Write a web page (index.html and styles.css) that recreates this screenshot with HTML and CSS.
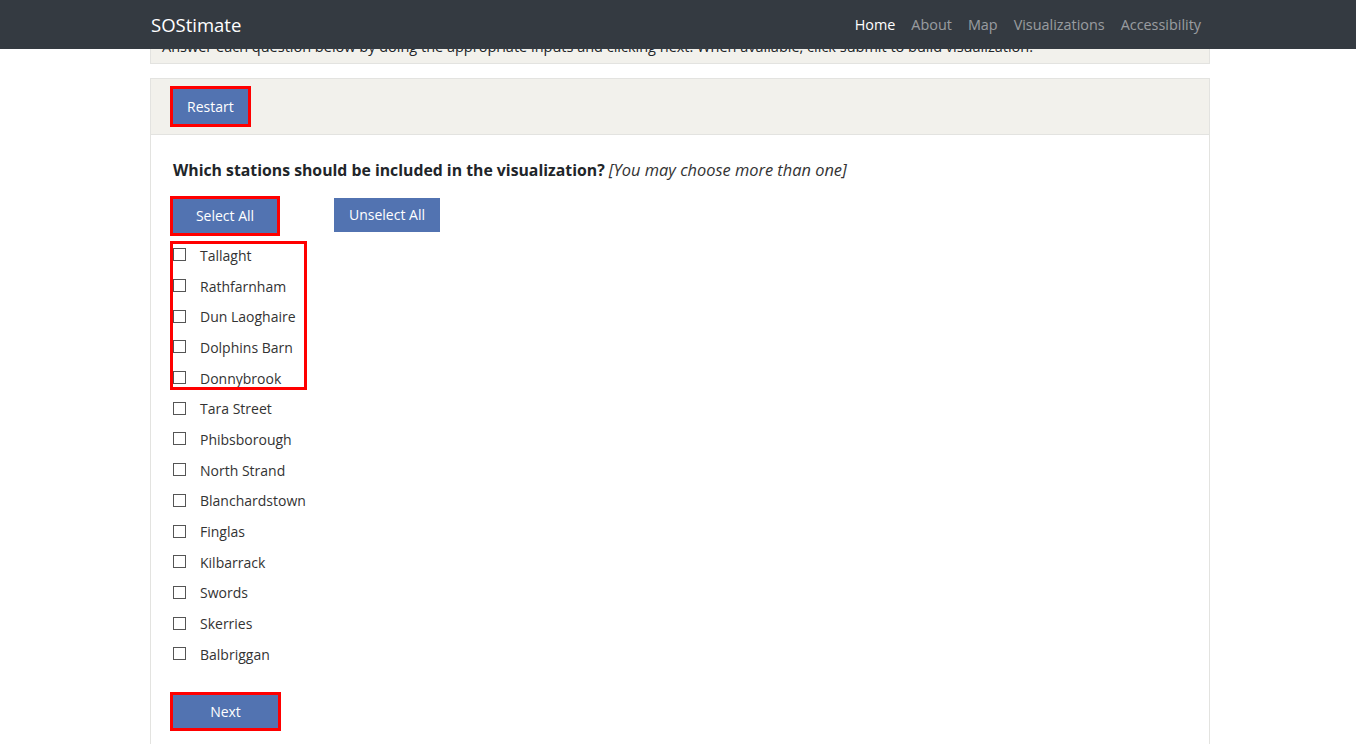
FILE: index.html
```html
<!DOCTYPE html>
<html lang="en">
<head>
<meta charset="utf-8">
<title>SOStimate</title>
<link rel="stylesheet" href="styles.css">
</head>
<body>
<nav class="navbar">
  <div class="nav-inner">
    <a class="brand" href="#">SOStimate</a>
    <ul class="nav-links">
      <li><a class="active" href="#">Home</a></li>
      <li><a href="#">About</a></li>
      <li><a href="#">Map</a></li>
      <li><a href="#">Visualizations</a></li>
      <li><a href="#">Accessibility</a></li>
    </ul>
  </div>
</nav>
<main class="container">
  <div class="intro">Answer each question below by doing the appropriate inputs and clicking next. When available, click submit to build visualization.</div>
  <section class="card">
    <div class="card-header">
      <button class="btn flagged">Restart</button>
    </div>
    <div class="card-body">
      <p class="question"><strong>Which stations should be included in the visualization?</strong> <em>[You may choose more than one]</em></p>
      <div class="btn-row">
        <button class="btn flagged btn-select">Select All</button>
        <button class="btn btn-unselect">Unselect All</button>
      </div>
      <div class="options">
        <div class="group flagged-group">
          <label class="opt"><span class="box"></span>Tallaght</label>
          <label class="opt"><span class="box"></span>Rathfarnham</label>
          <label class="opt"><span class="box"></span>Dun Laoghaire</label>
          <label class="opt"><span class="box"></span>Dolphins Barn</label>
          <label class="opt"><span class="box"></span>Donnybrook</label>
        </div>
        <label class="opt"><span class="box"></span>Tara Street</label>
        <label class="opt"><span class="box"></span>Phibsborough</label>
        <label class="opt"><span class="box"></span>North Strand</label>
        <label class="opt"><span class="box"></span>Blanchardstown</label>
        <label class="opt"><span class="box"></span>Finglas</label>
        <label class="opt"><span class="box"></span>Kilbarrack</label>
        <label class="opt"><span class="box"></span>Swords</label>
        <label class="opt"><span class="box"></span>Skerries</label>
        <label class="opt"><span class="box"></span>Balbriggan</label>
      </div>
      <button class="btn flagged btn-next">Next</button>
    </div>
  </section>
</main>
</body>
</html>
```
FILE: styles.css
```css
*, *::before, *::after { box-sizing: border-box; }
html, body { margin: 0; padding: 0; }
body {
  font-family: "Open Sans", "Noto Sans", sans-serif;
  font-size: 14px;
  color: #212529;
  background: #fff;
}
.navbar {
  position: fixed;
  top: 0; left: 0; right: 0;
  height: 49px;
  background: #343a41;
  z-index: 10;
}
.nav-inner {
  width: 1060px;
  margin-left: calc(50% - 528px);
  height: 100%;
  display: flex;
  align-items: center;
  justify-content: space-between;
}
.brand {
  color: #fff;
  text-decoration: none;
  font-size: 18.5px;
  padding-left: 1px;
}
.nav-links {
  list-style: none;
  margin: 0;
  padding: 0;
  display: flex;
}
.nav-links a {
  display: block;
  padding: 0 8px;
  color: rgba(255,255,255,0.5);
  text-decoration: none;
  font-size: 14.4px;
}
.nav-links li:last-child a { padding-right: 9px; }
.nav-links a.active { color: #fff; }

.container {
  width: 1060px;
  margin-left: calc(50% - 528px);
  padding-top: 28px;
}
.intro {
  background: #f2f1ec;
  border: 1px solid #e3e3e0;
  padding: 7px 11px 5px;
  line-height: 22px;
  font-size: 14.5px;
  color: #212529;
}
.card {
  margin-top: 14px;
  border: 1px solid #e3e3e0;
  border-bottom: none;
  min-height: 700px;
}
.card-header {
  background: #f2f1ec;
  border-bottom: 1px solid #e3e3e0;
  padding: 10px 22px;
}
.card-body {
  padding: 24px 22px 20px;
}
.btn {
  font-family: inherit;
  font-size: 14px;
  color: #fff;
  background: #5273b1;
  border: none;
  border-radius: 0;
  height: 35px;
  padding: 0 14px;
  display: block;
  line-height: 35px;
}
.flagged { outline: 3px solid #f00; }
.question {
  margin: 0;
  line-height: 22px;
  font-size: 15.8px;
  color: #212529;
}
.question em { color: #333; font-size: 16.4px; }
.btn-row {
  margin-top: 18px;
  display: flex;
  align-items: flex-start;
  gap: 57px;
}
.btn-select { width: 104px; height: 34px; line-height: 34px; padding: 0; }
.btn-unselect { width: 106px; height: 34px; line-height: 34px; padding: 0; margin-top: -1px; }
.options {
  margin-top: 7px;
}
.group { position: relative; }
.flagged-group::after {
  content: "";
  position: absolute;
  left: -3px;
  top: 1px;
  width: 137px;
  bottom: 3px;
  border: 3px solid #f00;
  pointer-events: none;
}
.opt {
  display: flex;
  align-items: center;
  height: 30.7px;
  color: #333;
  font-size: 14px;
}
.box {
  width: 13px;
  height: 13px;
  border: 1px solid #555;
  background: #fff;
  margin-right: 14px;
  margin-top: -1px;
  flex: none;
}
.btn-next {
  margin-top: 25px;
  width: 105px;
  height: 33px;
  line-height: 33px;
  padding: 0;
}
```
